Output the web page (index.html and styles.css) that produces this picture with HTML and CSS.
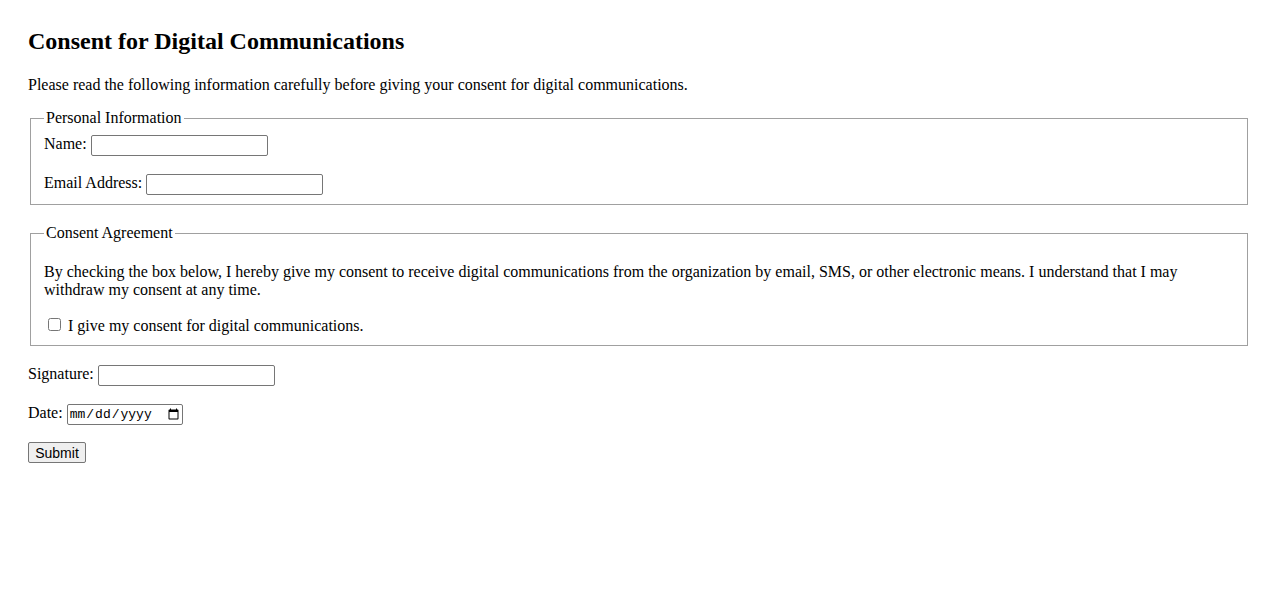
FILE: index.html
```html
<!DOCTYPE html>
<html lang="en">

<head>
	<meta charset="utf-8">
	<title>Consent for Digital Communications</title>
	<link rel="stylesheet" href="styles.css">
</head>

<body>

	<h2>Consent for Digital Communications</h2>

	<p class="intro">Please read the following information carefully before giving your consent for digital communications.</p>

	<form>
		<fieldset>
			<legend>Personal Information</legend>
			<div class="field">
				<label for="name">Name:</label>
				<input type="text" id="name" name="name">
			</div>
			<div class="field last">
				<label for="email">Email Address:</label>
				<input type="email" id="email" name="email">
			</div>
		</fieldset>

		<fieldset class="agreement">
			<legend>Consent Agreement</legend>
			<p class="terms">By checking the box below, I hereby give my consent to receive digital communications from the organization by email, SMS, or other electronic means. I understand that I may withdraw my consent at any time.</p>
			<div class="field last">
				<input type="checkbox" id="consent" name="consent">
				<label for="consent">I give my consent for digital communications.</label>
			</div>
		</fieldset>

		<div class="field">
			<label for="signature">Signature:</label>
			<input type="text" id="signature" name="signature">
		</div>

		<div class="field date-field">
			<label for="date">Date:</label>
			<input type="date" id="date" name="date">
		</div>

		<button type="submit">Submit</button>
	</form>

</body>

</html>
```

FILE: styles.css
```css
body {
	margin: 28px;
	font-family: "Liberation Serif", "Times New Roman", serif;
	font-size: 16px;
	color: #000;
	background-color: #fff;
}

h2 {
	font-size: 24px;
	margin: 0 0 21px 0;
}

.intro {
	margin: 0 0 15px 0;
}

.terms {
	margin: 13px 0 16px 0;
}

fieldset {
	border: 1px solid #a0a0a0;
	margin: 0 2px 19px 2px;
	padding: 8px 12px 9px 13px;
}

fieldset.agreement {
	padding-bottom: 10px;
}

legend {
	padding: 0 2px;
}

.field {
	margin-bottom: 18px;
}

.field.last {
	margin-bottom: 0;
}

.field.date-field {
	margin-bottom: 17px;
}

input[type="text"],
input[type="email"] {
	box-sizing: border-box;
	width: 177px;
	height: 21px;
	border: 1px solid #767676;
	border-radius: 2px;
	vertical-align: middle;
}

input[type="date"] {
	box-sizing: border-box;
	width: 116px;
	height: 21px;
	font-family: "Liberation Mono", "DejaVu Sans Mono", monospace;
	font-size: 13px;
	border: 1px solid #767676;
	border-radius: 2px;
	vertical-align: middle;
}

input[type="checkbox"] {
	margin: 3px 3px 3px 4px;
}

button {
	box-sizing: border-box;
	width: 58px;
	height: 21px;
	font-family: "Liberation Sans", Arial, sans-serif;
	font-size: 14px;
	padding: 1px 6px;
	border: 1px solid #767676;
	border-radius: 2px;
	background-color: #efefef;
	color: #000;
}
```
